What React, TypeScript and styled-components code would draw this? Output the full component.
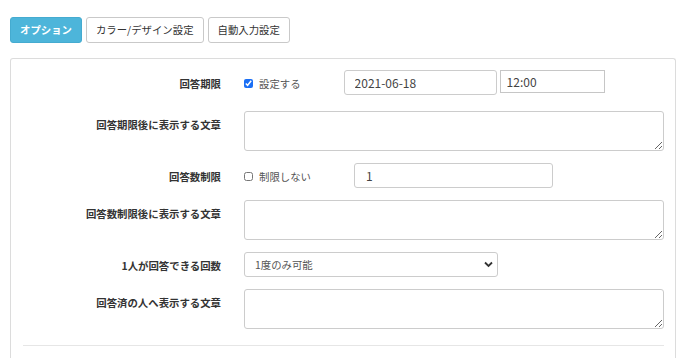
import React from "react";
import styled, { createGlobalStyle } from "styled-components";

const Global = createGlobalStyle`
  html, body { margin: 0; padding: 0; background: #fff; }
  body { font-family: "Noto Sans CJK JP", "Noto Sans", sans-serif; color: #333; }
  * { box-sizing: border-box; }
`;

const Page = styled.div`
  padding: 17px 15px 0 10px;
`;

const TabBar = styled.div`
  display: flex;
  gap: 4px;
  margin-bottom: 15px;
`;

const Tab = styled.button<{ $active?: boolean }>`
  height: 26px;
  padding: 0 9px;
  font-family: inherit;
  font-size: 10.4px;
  line-height: 24px;
  border-radius: 3px;
  border: 1px solid ${(p) => (p.$active ? "#45abd0" : "#c9c9c9")};
  background: ${(p) => (p.$active ? "#4db5da" : "#fff")};
  color: ${(p) => (p.$active ? "#fff" : "#333")};
  font-weight: ${(p) => (p.$active ? 700 : 400)};
  cursor: pointer;
`;

const Panel = styled.div`
  border: 1px solid #dcdcdc;
  border-bottom: none;
  border-radius: 3px 3px 0 0;
  padding: 11px 11px 12px 12px;
  display: flex;
  flex-direction: column;
  gap: 12px;
`;

const Row = styled.div<{ $extra?: number }>`
  display: grid;
  grid-template-columns: 198px 1fr;
  column-gap: 23px;
  align-items: start;
  margin-bottom: ${(p) => p.$extra ?? 0}px;
`;

const Label = styled.div`
  text-align: right;
  font-weight: 700;
  font-size: 10.4px;
  line-height: 15px;
  padding-top: 6px;
  color: #333;
`;

const Controls = styled.div`
  display: flex;
  align-items: center;
  height: 25px;
`;

const Check = styled.label<{ $gapAfter: number }>`
  display: flex;
  align-items: center;
  gap: 6px;
  font-size: 10.4px;
  color: #555;
  margin-right: ${(p) => p.$gapAfter}px;
  line-height: 15px;
  padding-top: 1px;
`;

const Box = styled.input`
  width: 9px;
  height: 9px;
  margin: 0;
  accent-color: #1b6ff5;
`;

const TextInput = styled.input<{ $w: number; $square?: boolean; $h?: number; $pl?: number }>`
  width: ${(p) => p.$w}px;
  height: ${(p) => p.$h ?? 25}px;
  border: 1px solid ${(p) => (p.$square ? "#c6c6c6" : "#cccccc")};
  border-radius: ${(p) => (p.$square ? 0 : 3)}px;
  padding: 0 0 0 ${(p) => p.$pl ?? 10}px;
  font-family: "Noto Sans CJK JP", sans-serif;
  font-size: 12px;
  color: #444;
  outline: none;
  align-self: flex-start;
`;

const Area = styled.textarea`
  display: block;
  width: 100%;
  height: 40px;
  border: 1px solid #cccccc;
  border-radius: 3px;
  resize: both;
  font-family: inherit;
  outline: none;
`;

const SelectWrap = styled.div`
  position: relative;
  width: 254px;
  height: 25px;
`;

const Select = styled.select`
  appearance: none;
  display: block;
  width: 100%;
  height: 100%;
  border: 1px solid #cccccc;
  border-radius: 3px;
  background: #fff;
  padding: 0 0 0 10px;
  font-family: "Noto Sans CJK JP", sans-serif;
  font-size: 10.4px;
  color: #555;
  outline: none;
`;

const Chevron = styled.svg`
  position: absolute;
  right: 5px;
  top: 9px;
  width: 9px;
  height: 7px;
  pointer-events: none;
`;

const Divider = styled.hr`
  border: none;
  border-top: 1px solid #e6e6e6;
  margin: 4px 0 0;
`;

export default function App() {
  return (
    <Page>
      <Global />
      <TabBar>
        <Tab $active>オプション</Tab>
        <Tab>カラー/デザイン設定</Tab>
        <Tab>自動入力設定</Tab>
      </TabBar>
      <Panel>
        <Row $extra={4}>
          <Label>回答期限</Label>
          <Controls>
            <Check $gapAfter={43}>
              <Box type="checkbox" defaultChecked />
              設定する
            </Check>
            <TextInput $w={153} defaultValue="2021-06-18" />
            <TextInput $w={105} $h={23} $square $pl={6} defaultValue="12:00" style={{ marginLeft: 3 }} />
          </Controls>
        </Row>
        <Row>
          <Label>回答期限後に表示する文章</Label>
          <Area />
        </Row>
        <Row>
          <Label>回答数制限</Label>
          <Controls>
            <Check $gapAfter={43}>
              <Box type="checkbox" />
              制限しない
            </Check>
            <TextInput $w={199} $pl={11} defaultValue="1" />
          </Controls>
        </Row>
        <Row>
          <Label>回答数制限後に表示する文章</Label>
          <Area />
        </Row>
        <Row>
          <Label>1人が回答できる回数</Label>
          <SelectWrap>
            <Select defaultValue="1">
              <option value="1">1度のみ可能</option>
              <option value="n">何度でも可能</option>
            </Select>
            <Chevron viewBox="0 0 9 7">
              <path d="M1 1.5 L4.5 5 L8 1.5" fill="none" stroke="#333" strokeWidth="1.8" />
            </Chevron>
          </SelectWrap>
        </Row>
        <Row>
          <Label>回答済の人へ表示する文章</Label>
          <Area />
        </Row>
        <Divider />
      </Panel>
    </Page>
  );
}
